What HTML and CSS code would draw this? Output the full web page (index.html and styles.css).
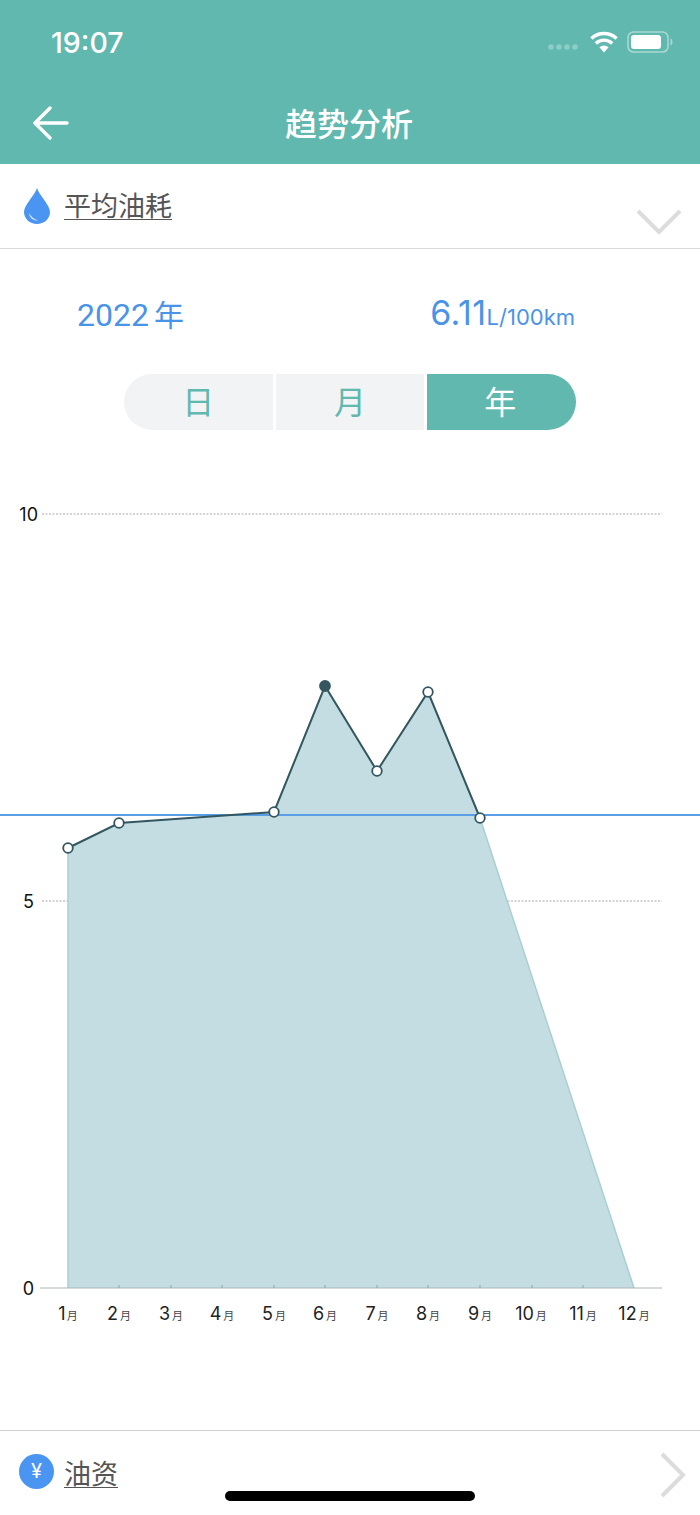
FILE: index.html
```html
<!DOCTYPE html>
<html lang="zh">
<head>
    <meta charset="UTF-8">
    <meta name="viewport" content="width=device-width, initial-scale=1.0">
    <title>趋势分析</title>
    <link rel="stylesheet" href="styles.css">
</head>
<body>
    <div class="page">
        <header class="header">
            <div class="status-bar">
                <span class="time">19:07</span>
                <div class="status-icons">
                    <svg class="signal" width="34" height="8" viewBox="0 0 34 8">
                        <circle cx="4" cy="4" r="2.800"/>
                        <circle cx="12" cy="4" r="2.800"/>
                        <circle cx="20" cy="4" r="2.800"/>
                        <circle cx="28" cy="4" r="2.800"/>
                    </svg>
                    <svg class="wifi" width="30" height="22" viewBox="0 0 30 22">
                        <path d="M15 21.500 L10.400 16.200 A7 7 0 0 1 19.600 16.200 Z" fill="#fff"/>
                        <path d="M6.800 12.400 A12 12 0 0 1 23.200 12.400" fill="none" stroke="#fff" stroke-width="3.400"/>
                        <path d="M2.400 7.400 A18.500 18.500 0 0 1 27.600 7.400" fill="none" stroke="#fff" stroke-width="3.400"/>
                    </svg>
                    <svg class="battery" width="46" height="22" viewBox="0 0 46 22">
                        <rect x="1" y="1" width="40" height="20" rx="5.500" fill="none" stroke="#a9d8d2" stroke-width="1.600"/>
                        <rect x="4" y="4" width="30" height="14" rx="3" fill="#fff"/>
                        <path d="M43.500 7.500 C45 8 45.500 9.500 45.500 11 C45.500 12.500 45 14 43.500 14.500 Z" fill="#a9d8d2"/>
                    </svg>
                </div>
            </div>
            <div class="nav-bar">
                <svg class="back" width="36" height="34" viewBox="0 0 36 34">
                    <path d="M17 2 L2 17 L17 32 M2 17 H34" fill="none" stroke="#fff" stroke-width="3.400" stroke-linecap="round" stroke-linejoin="round"/>
                </svg>
                <h1 class="title">趋势分析</h1>
            </div>
        </header>

        <section class="type-row">
            <svg class="drop" width="26" height="36" viewBox="0 0 26 36">
                <path d="M13 0 C15 7 26 17 26 24 C26 31 20 36 13 36 C6 36 0 31 0 24 C0 17 11 7 13 0 Z" fill="#4a94f2"/>
                <path d="M5 25 C5.500 30 9 32.500 14 32.500 C10 31 7.500 29 5 25 Z" fill="#d5e6fb"/>
            </svg>
            <span class="row-label">平均油耗</span>
            <svg class="chevron-down" width="46" height="28" viewBox="0 0 46 28">
                <path d="M2 3 L23 24 L44 3" fill="none" stroke="#dcdcdc" stroke-width="4"/>
            </svg>
        </section>

        <section class="summary">
            <span class="year">2022<span class="year-unit">年</span></span>
            <span class="average">6.11<small class="average-unit">L/100km</small></span>
        </section>

        <div class="segments">
            <div class="segment segment-first">日</div>
            <div class="segment">月</div>
            <div class="segment segment-active">年</div>
        </div>

        <div class="chart">
            <svg width="700" height="860" viewBox="0 490 700 860">
                <line class="grid" x1="42" y1="514" x2="662" y2="514"/>
                <line class="grid" x1="42" y1="901" x2="662" y2="901"/>

                <polygon class="area" points="68,848 119,823 274,812 325,686 377,771 428,692 480,818 634,1288 68,1288"/>
                <path class="area-edge" d="M68 848 V1288 M480 818 L634 1288"/>
                <line class="axis" x1="40" y1="1288" x2="662" y2="1288"/>
                <path class="ticks" d="M119 1285 V1288 M171 1285 V1288 M222 1285 V1288 M274 1285 V1288 M325 1285 V1288 M377 1285 V1288 M428 1285 V1288 M480 1285 V1288 M532 1285 V1288 M583 1285 V1288"/>

                <line class="average-line" x1="0" y1="815" x2="700" y2="815"/>
                <polyline class="trend" points="68,848 119,823 274,812 325,686 377,771 428,692 480,818"/>
                <circle class="dot" cx="68" cy="848" r="4.800"/>
                <circle class="dot" cx="119" cy="823" r="4.800"/>
                <circle class="dot" cx="274" cy="812" r="4.800"/>
                <circle class="dot dot-active" cx="325" cy="686" r="5"/>
                <circle class="dot" cx="377" cy="771" r="4.800"/>
                <circle class="dot" cx="428" cy="692" r="4.800"/>
                <circle class="dot" cx="480" cy="818" r="4.800"/>

                <text class="y-label" x="38" y="521">10</text>
                <text class="y-label" x="34" y="908">5</text>
                <text class="y-label" x="34" y="1295">0</text>

                <text class="x-label" x="68" y="1320">1<tspan class="x-unit" dx="1">月</tspan></text>
                <text class="x-label" x="119" y="1320">2<tspan class="x-unit" dx="2">月</tspan></text>
                <text class="x-label" x="171" y="1320">3<tspan class="x-unit" dx="2">月</tspan></text>
                <text class="x-label" x="222" y="1320">4<tspan class="x-unit" dx="2">月</tspan></text>
                <text class="x-label" x="274" y="1320">5<tspan class="x-unit" dx="2">月</tspan></text>
                <text class="x-label" x="325" y="1320">6<tspan class="x-unit" dx="2">月</tspan></text>
                <text class="x-label" x="377" y="1320">7<tspan class="x-unit" dx="2">月</tspan></text>
                <text class="x-label" x="428" y="1320">8<tspan class="x-unit" dx="2">月</tspan></text>
                <text class="x-label" x="480" y="1320">9<tspan class="x-unit" dx="2">月</tspan></text>
                <text class="x-label" x="531" y="1320">10<tspan class="x-unit" dx="2">月</tspan></text>
                <text class="x-label" x="583" y="1320">11<tspan class="x-unit" dx="2">月</tspan></text>
                <text class="x-label" x="634" y="1320">12<tspan class="x-unit" dx="2">月</tspan></text>
            </svg>
        </div>

        <footer class="footer-row">
            <span class="yen-badge">¥</span>
            <span class="row-label">油资</span>
            <svg class="chevron-right" width="28" height="46" viewBox="0 0 28 46">
                <path d="M3 2 L24 23 L3 44" fill="none" stroke="#dcdcdc" stroke-width="4"/>
            </svg>
            <div class="home-indicator"></div>
        </footer>
    </div>
</body>
</html>
```

FILE: styles.css
```css
* {
    margin: 0;
    padding: 0;
    box-sizing: border-box;
}

body {
    background: #fff;
    font-family: 'Inter', 'Noto Sans CJK SC', sans-serif;
    overflow: hidden;
}

.page {
    width: 700px;
    height: 1515px;
    display: flex;
    flex-direction: column;
}

.header {
    height: 164px;
    background: #60b8af;
    color: #fff;
    flex-shrink: 0;
}

.status-bar {
    height: 84px;
    padding: 24px 27px 0 51px;
    display: flex;
    justify-content: space-between;
    align-items: flex-start;
}

.time {
    font-size: 28.500px;
    font-weight: 500;
    line-height: 38px;
}

.status-icons {
    display: flex;
    align-items: center;
    gap: 8px;
    padding-top: 7px;
}

.signal {
    fill: #8ccdc6;
    margin-top: 9px;
}

.nav-bar {
    height: 80px;
    padding-left: 33px;
    position: relative;
    display: flex;
    align-items: center;
}

.back {
    margin-bottom: 2px;
}

.title {
    position: absolute;
    left: 0;
    right: 0;
    top: 17px;
    text-align: center;
    font-family: 'Noto Sans CJK SC', sans-serif;
    font-size: 32px;
    line-height: 42px;
    font-weight: 500;
    padding-right: 2px;
}

.type-row {
    height: 85px;
    padding: 23px 21px 0 24px;
    border-bottom: 1px solid #d9d9d9;
    display: flex;
    align-items: flex-start;
    flex-shrink: 0;
}

.drop {
    margin-top: 1px;
    margin-right: 14px;
}

.row-label {
    font-family: 'Noto Sans CJK SC', sans-serif;
    font-size: 27px;
    line-height: 36px;
    color: #555;
    text-decoration: underline;
    text-underline-offset: 3px;
    text-decoration-thickness: 1px;
}

.chevron-down {
    margin-left: auto;
    margin-top: 21px;
    margin-right: -3px;
}

.summary {
    height: 125px;
    padding: 43px 125px 0 77px;
    display: flex;
    justify-content: space-between;
    align-items: flex-start;
    color: #4a94e8;
    flex-shrink: 0;
}

.year {
    font-family: 'Roboto', sans-serif;
    font-size: 32px;
    line-height: 42px;
}

.year-unit {
    font-family: 'Noto Sans CJK SC', sans-serif;
    font-size: 30px;
    margin-left: 5px;
}

.average {
    font-size: 34px;
    line-height: 42px;
    letter-spacing: 0.5px;
}

.average-unit {
    font-size: 22px;
    letter-spacing: 0;
}

.segments {
    width: 452px;
    height: 56px;
    margin-left: 124px;
    display: grid;
    grid-template-columns: repeat(3, 1fr);
    gap: 3px;
    flex-shrink: 0;
}

.segment {
    background: #f2f3f5;
    color: #60b8af;
    font-family: 'Noto Sans CJK SC', sans-serif;
    font-size: 32px;
    line-height: 53px;
    text-align: center;
}

.segment-first {
    border-radius: 28px 0 0 28px;
}

.segment-active {
    background: #60b8af;
    color: #fff;
    border-radius: 0 28px 28px 0;
    padding-right: 3px;
}

.chart {
    flex: 1;
    margin-top: 60px;
}

.chart svg {
    display: block;
}

.grid {
    stroke: #a8a8a8;
    stroke-width: 1;
    stroke-dasharray: 2 1.500;
}

.area {
    fill: #c3dde2;
}

.area-edge {
    fill: none;
    stroke: #a9cfd2;
    stroke-width: 1.500;
}

.axis {
    stroke: #a9b4b6;
    stroke-width: 1;
}

.ticks {
    fill: none;
    stroke: #8fa3a6;
    stroke-width: 1;
}

.average-line {
    stroke: #5a9fe6;
    stroke-width: 2;
}

.trend {
    fill: none;
    stroke: #33565f;
    stroke-width: 2;
}

.dot {
    fill: #fff;
    stroke: #33565f;
    stroke-width: 1.800;
}

.dot-active {
    fill: #33565f;
}

.y-label {
    font-size: 18px;
    fill: #111;
    text-anchor: end;
}

.x-label {
    font-size: 18px;
    fill: #222;
    text-anchor: middle;
}

.x-unit {
    font-family: 'Noto Sans CJK SC', sans-serif;
    font-size: 11px;
    fill: #444;
}

.footer-row {
    height: 85px;
    flex-shrink: 0;
    position: relative;
    border-top: 1px solid #cfcfcf;
    padding: 23px 20px 0 19px;
    display: flex;
    align-items: flex-start;
}

.yen-badge {
    width: 35px;
    height: 35px;
    border-radius: 50%;
    background: #4a94f2;
    color: #fff;
    font-size: 20px;
    line-height: 35px;
    text-align: center;
    margin-right: 10px;
}

.footer-row .row-label {
    margin-top: 1px;
}

.chevron-right {
    margin-left: auto;
    margin-top: -2px;
    margin-right: -7px;
}

.home-indicator {
    position: absolute;
    left: 225px;
    top: 60px;
    width: 250px;
    height: 10px;
    background: #000;
    border-radius: 5px;
}
```
